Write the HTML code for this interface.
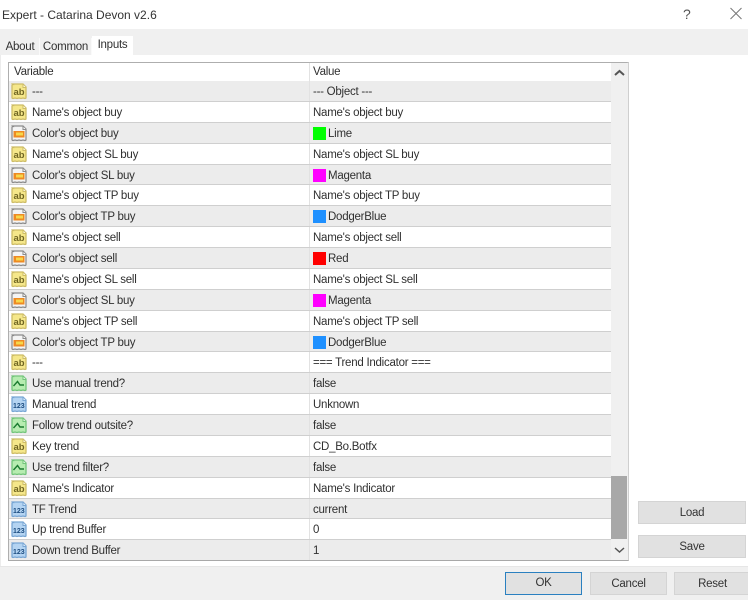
<!DOCTYPE html>
<html><head><meta charset="utf-8"><style>
*{box-sizing:border-box}
html,body{margin:0;padding:0}
body{width:748px;height:600px;position:relative;overflow:hidden;background:#fff;font:11.500px "Liberation Sans",Arial,sans-serif;letter-spacing:-.25px;color:#303030}
.a{position:absolute}
#tabbar{left:0;top:29px;width:748px;height:26px;background:#f0f0f0}
.tab{position:absolute;text-align:center;line-height:19px;background:#f0f0f0;border-right:1px solid #fafafa;font-size:11.500px}
#panel{left:0;top:55px;width:748px;height:511px;background:#fff;border-left:1px solid #ececec}
#bottom{left:0;top:566px;width:748px;height:34px;background:#f0f0f0;border-top:1px solid #e6e6e6}
#table{left:8px;top:62px;width:621px;height:499px;border:1px solid #aeaeae;border-right:2px solid #cfcfcf;border-bottom:2px solid #a8a8a8;background:#fff}
#head{left:0;top:0;width:602px;height:18px;line-height:18px;background:#fff}
#rows{left:0;top:18px;width:602px;height:479px;display:flex;flex-direction:column}
.r{flex:1 1 0;min-height:0;position:relative;border-bottom:1px solid #cfcfcf;line-height:20px}
.r:nth-child(odd){background:#ececec}
.r:last-child{border-bottom:0}
.r svg{position:absolute;left:1px;top:0;width:18px;height:20px;letter-spacing:0}
.n{position:absolute;left:23px;top:1px;white-space:nowrap}
.v{position:absolute;left:304px;top:1px;white-space:nowrap}
.d{position:absolute;left:300px;top:0;bottom:0;width:1px;background:#e2e2e2}
.s{position:absolute;left:304px;top:4px;width:13px;height:13px}
.v2{left:319px}
#sb{left:602px;top:0;width:17px;height:497px;background:#f0f0f0}
#th{left:0;top:413px;width:16px;height:63px;background:#a8a8a8}
.b{position:absolute;background:#e1e1e1;border:1px solid #d4d4d4;text-align:center;line-height:22px;color:#333;font-size:11.500px}
</style></head><body>
<svg width="0" height="0" style="position:absolute"><defs>
<symbol id="ab" viewBox="0 0 18 20"><path d="M2.500 3h10.500l3 3v10.500q0 1-1 1l-2-.5-2 .5-2-.5-2 .5-2-.5-2 .5q-1 0-1-1v-12q0-1 1-1z" fill="#f5e78a" stroke="#cdbc66" stroke-width="1.300"/><path d="M13 3.500v3h3" fill="#fffbe0" stroke="#cdbc66"/></symbol>
<symbol id="c" viewBox="0 0 18 20"><path d="M2.500 3h10.500l3 3v10.500q0 1-1 1l-2-.5-2 .5-2-.5-2 .5-2-.5-2 .5q-1 0-1-1v-12q0-1 1-1z" fill="#f4f4f4" stroke="#8a8a8a" stroke-width="1.200"/><path d="M13 3.500v3h3" fill="#fff" stroke="#8a8a8a"/><rect x="3.500" y="8" width="11" height="6.500" fill="#ee8a22"/><rect x="6" y="9.500" width="7" height="3" fill="#f7d84a"/></symbol>
<symbol id="b" viewBox="0 0 18 20"><path d="M2.500 3h10.500l3 3v10.500q0 1-1 1l-2-.5-2 .5-2-.5-2 .5-2-.5-2 .5q-1 0-1-1v-12q0-1 1-1z" fill="#b6ecb0" stroke="#72c47a" stroke-width="1.300"/><path d="M13 3.500v3h3" fill="#e6fae4" stroke="#72c47a"/><path d="M3.500 13l4-4.500 2.500 3.500h4" fill="none" stroke="#1a7a30" stroke-width="1.400"/></symbol>
<symbol id="i" viewBox="0 0 18 20"><path d="M2.500 3h10.500l3 3v10.500q0 1-1 1l-2-.5-2 .5-2-.5-2 .5-2-.5-2 .5q-1 0-1-1v-12q0-1 1-1z" fill="#b4d4f2" stroke="#78a6d4" stroke-width="1.300"/><path d="M13 3.500v3h3" fill="#e4f0fb" stroke="#78a6d4"/></symbol>
</defs></svg>
<div class="a" style="left:2px;top:7px;font-size:12px;letter-spacing:0;line-height:16px;color:#333">Expert - Catarina Devon v2.6</div>
<div class="a" style="left:683px;top:5px;font-size:14px;line-height:18px;color:#555">?</div>
<svg class="a" style="left:730px;top:7px" width="13" height="13"><path d="M.5 1l11 11M11.500 1l-11 11" stroke="#777" fill="none"/></svg>
<div class="a" id="tabbar"></div>
<div class="tab" style="left:1px;top:38px;width:39px;height:17px">About</div>
<div class="tab" style="left:40px;top:38px;width:52px;height:17px">Common</div>
<div class="tab" style="left:92px;top:36px;width:41px;height:20px;background:#fff;border:0;z-index:2">Inputs</div>
<div class="a" id="panel"></div>
<div class="a" id="bottom"></div>
<div class="a" id="table">
<div class="a" id="head"><span class="n" style="left:5px;top:0">Variable</span><span class="v" style="top:0">Value</span><span class="d"></span></div>
<div class="a" id="rows">
<div class="r"><svg><use href="#ab"/><text x="3.500" y="14" font-size="9.500" font-weight="700" fill="#6f6522">ab</text></svg><span class="n">---</span><span class="d"></span><span class="v">--- Object ---</span></div>
<div class="r"><svg><use href="#ab"/><text x="3.500" y="14" font-size="9.500" font-weight="700" fill="#6f6522">ab</text></svg><span class="n">Name's object buy</span><span class="d"></span><span class="v">Name's object buy</span></div>
<div class="r"><svg><use href="#c"/></svg><span class="n">Color's object buy</span><span class="d"></span><i class="s" style="background:#0f0"></i><span class="v v2">Lime</span></div>
<div class="r"><svg><use href="#ab"/><text x="3.500" y="14" font-size="9.500" font-weight="700" fill="#6f6522">ab</text></svg><span class="n">Name's object SL buy</span><span class="d"></span><span class="v">Name's object SL buy</span></div>
<div class="r"><svg><use href="#c"/></svg><span class="n">Color's object SL buy</span><span class="d"></span><i class="s" style="background:#f0f"></i><span class="v v2">Magenta</span></div>
<div class="r"><svg><use href="#ab"/><text x="3.500" y="14" font-size="9.500" font-weight="700" fill="#6f6522">ab</text></svg><span class="n">Name's object TP buy</span><span class="d"></span><span class="v">Name's object TP buy</span></div>
<div class="r"><svg><use href="#c"/></svg><span class="n">Color's object TP buy</span><span class="d"></span><i class="s" style="background:#1e90ff"></i><span class="v v2">DodgerBlue</span></div>
<div class="r"><svg><use href="#ab"/><text x="3.500" y="14" font-size="9.500" font-weight="700" fill="#6f6522">ab</text></svg><span class="n">Name's object sell</span><span class="d"></span><span class="v">Name's object sell</span></div>
<div class="r"><svg><use href="#c"/></svg><span class="n">Color's object sell</span><span class="d"></span><i class="s" style="background:#f00"></i><span class="v v2">Red</span></div>
<div class="r"><svg><use href="#ab"/><text x="3.500" y="14" font-size="9.500" font-weight="700" fill="#6f6522">ab</text></svg><span class="n">Name's object SL sell</span><span class="d"></span><span class="v">Name's object SL sell</span></div>
<div class="r"><svg><use href="#c"/></svg><span class="n">Color's object SL buy</span><span class="d"></span><i class="s" style="background:#f0f"></i><span class="v v2">Magenta</span></div>
<div class="r"><svg><use href="#ab"/><text x="3.500" y="14" font-size="9.500" font-weight="700" fill="#6f6522">ab</text></svg><span class="n">Name's object TP sell</span><span class="d"></span><span class="v">Name's object TP sell</span></div>
<div class="r"><svg><use href="#c"/></svg><span class="n">Color's object TP buy</span><span class="d"></span><i class="s" style="background:#1e90ff"></i><span class="v v2">DodgerBlue</span></div>
<div class="r"><svg><use href="#ab"/><text x="3.500" y="14" font-size="9.500" font-weight="700" fill="#6f6522">ab</text></svg><span class="n">---</span><span class="d"></span><span class="v">=== Trend Indicator ===</span></div>
<div class="r"><svg><use href="#b"/></svg><span class="n">Use manual trend?</span><span class="d"></span><span class="v">false</span></div>
<div class="r"><svg><use href="#i"/><text x="3" y="14" font-size="7" font-weight="700" fill="#1d4d80">123</text></svg><span class="n">Manual trend</span><span class="d"></span><span class="v">Unknown</span></div>
<div class="r"><svg><use href="#b"/></svg><span class="n">Follow trend outsite?</span><span class="d"></span><span class="v">false</span></div>
<div class="r"><svg><use href="#ab"/><text x="3.500" y="14" font-size="9.500" font-weight="700" fill="#6f6522">ab</text></svg><span class="n">Key trend</span><span class="d"></span><span class="v">CD_Bo.Botfx</span></div>
<div class="r"><svg><use href="#b"/></svg><span class="n">Use trend filter?</span><span class="d"></span><span class="v">false</span></div>
<div class="r"><svg><use href="#ab"/><text x="3.500" y="14" font-size="9.500" font-weight="700" fill="#6f6522">ab</text></svg><span class="n">Name's Indicator</span><span class="d"></span><span class="v">Name's Indicator</span></div>
<div class="r"><svg><use href="#i"/><text x="3" y="14" font-size="7" font-weight="700" fill="#1d4d80">123</text></svg><span class="n">TF Trend</span><span class="d"></span><span class="v">current</span></div>
<div class="r"><svg><use href="#i"/><text x="3" y="14" font-size="7" font-weight="700" fill="#1d4d80">123</text></svg><span class="n">Up trend Buffer</span><span class="d"></span><span class="v">0</span></div>
<div class="r"><svg><use href="#i"/><text x="3" y="14" font-size="7" font-weight="700" fill="#1d4d80">123</text></svg><span class="n">Down trend Buffer</span><span class="d"></span><span class="v">1</span></div>
</div>
<div class="a" id="sb"><div class="a" id="th"></div>
<svg class="a" style="left:3px;top:6px" width="11" height="8"><path d="M1 6l4.500-4 4.500 4" fill="none" stroke="#555" stroke-width="2"/></svg>
<svg class="a" style="left:3px;top:483px" width="11" height="8"><path d="M1 2l4.500 4 4.500-4" fill="none" stroke="#555" stroke-width="1.500"/></svg>
</div>
</div>
<div class="b" style="left:638px;top:501px;width:108px;height:23px">Load</div>
<div class="b" style="left:638px;top:535px;width:108px;height:23px">Save</div>
<div class="b" style="left:505px;top:572px;width:77px;height:23px;border:1.500px solid #2a80c0;line-height:21px">OK</div>
<div class="b" style="left:590px;top:572px;width:77px;height:23px">Cancel</div>
<div class="b" style="left:674px;top:572px;width:77px;height:23px">Reset</div>
</body></html>
